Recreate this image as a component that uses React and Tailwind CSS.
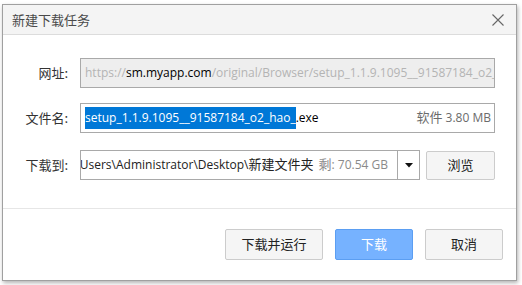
import React from 'react';

const cjk = '"Noto Sans CJK SC", sans-serif';
const latin = '"Open Sans", "Noto Sans CJK SC", sans-serif';

function Label({ children }) {
    return (
        <div className="w-[66px] shrink-0 text-right text-[13px] leading-[18px] text-[#333] pr-[1px]" style={{ fontFamily: cjk }}>
            {children}
        </div>
    );
}

export default function App() {
    return (
        <div className="w-[522px] h-[285px] bg-white pl-[2px] pt-[4px]">
            <div className="w-[515px] h-[277px] bg-white border border-[#a0a0a0] shadow-[1px_2px_4px_rgba(0,0,0,0.3)] flex flex-col">
                {/* title bar */}
                <div className="h-[30px] shrink-0 bg-[#f4f4f4] border-b border-[#dcdcdc] flex items-center justify-between pl-[9px] pr-[12px]">
                    <span className="text-[13px] text-[#4a4a4a]" style={{ fontFamily: cjk }}>新建下载任务</span>
                    <svg width="12" height="12" viewBox="0 0 12 12">
                        <path d="M0.5 0.5 L11.5 11.5 M11.5 0.5 L0.5 11.5" stroke="#666" strokeWidth="1.1" />
                    </svg>
                </div>

                {/* body */}
                <div className="h-[174px] shrink-0 border-b border-[#e6e6e6] pt-[23px] flex flex-col">
                    <div className="flex items-center gap-[11px]">
                        <Label>网址:</Label>
                        <div className="w-[415px] h-[30px] bg-[#eeeeee] border border-[#a9a9a9] flex items-center pl-[4px] overflow-hidden whitespace-nowrap text-[12px] text-[#b4b4b4]" style={{ fontFamily: latin }}>
                            https://<span className="text-black">sm.myapp.com</span>/original/Browser/setup_1.1.9.1095__91587184_o2_hao_.exe
                        </div>
                    </div>

                    <div className="flex items-center gap-[11px] mt-[15px]">
                        <Label>文件名:</Label>
                        <div className="w-[415px] h-[30px] bg-white border border-[#a9a9a9] flex items-center pl-[4px] pr-[3px] whitespace-nowrap text-[12px]" style={{ fontFamily: latin }}>
                            <span className="bg-[#0078d7] text-white leading-[22px]">setup_1.1.9.1095__91587184_o2_hao_</span>
                            <span className="text-black">.exe</span>
                            <span className="ml-auto text-[#6b6b6b]"><span className="text-[13px]">软件</span> 3.80 MB</span>
                        </div>
                    </div>

                    <div className="flex items-center mt-[17px]">
                        <Label>下载到:</Label>
                        <div className="ml-[11px] w-[318px] h-[30px] bg-white border border-[#a9a9a9] flex items-center pr-[9px] whitespace-nowrap text-[12px]" style={{ fontFamily: latin }}>
                            <div className="flex-1 min-w-0 overflow-hidden flex justify-end pl-[3px]">
                                <span className="shrink-0 text-[#222]">C:\Users\Administrator\Desktop\<span className="text-[13px]">新建文件夹</span></span>
                            </div>
                            <span className="ml-[5px] text-[#8a8a8a]"><span className="text-[13px]">剩</span>: 70.54 GB</span>
                        </div>
                        <div className="w-[22px] h-[30px] border border-l-0 border-[#a9a9a9] flex items-center justify-center">
                            <svg width="8" height="5" viewBox="0 0 8 5">
                                <path d="M0 0 L8 0 L4 4.5 Z" fill="#111" />
                            </svg>
                        </div>
                        <button className="ml-[6px] w-[69px] h-[29px] bg-[#f5f5f5] border border-[#cccccc] rounded-[2px] text-[13px] text-[#222]" style={{ fontFamily: cjk }}>
                            浏览
                        </button>
                    </div>
                </div>

                {/* footer */}
                <div className="flex-1 flex items-center justify-end gap-[12px] pr-[13px] pb-[1px]">
                    <button className="w-[98px] h-[31px] bg-[#f5f5f5] border border-[#cccccc] rounded-[2px] text-[13px] text-[#222]" style={{ fontFamily: cjk }}>
                        下载并运行
                    </button>
                    <button className="w-[78px] h-[31px] bg-[#76b2ff] border border-[#5b9ef2] rounded-[2px] text-[13px] text-white" style={{ fontFamily: cjk }}>
                        下载
                    </button>
                    <button className="w-[78px] h-[31px] bg-[#f5f5f5] border border-[#cccccc] rounded-[2px] text-[13px] text-[#222]" style={{ fontFamily: cjk }}>
                        取消
                    </button>
                </div>
            </div>
        </div>
    );
}
